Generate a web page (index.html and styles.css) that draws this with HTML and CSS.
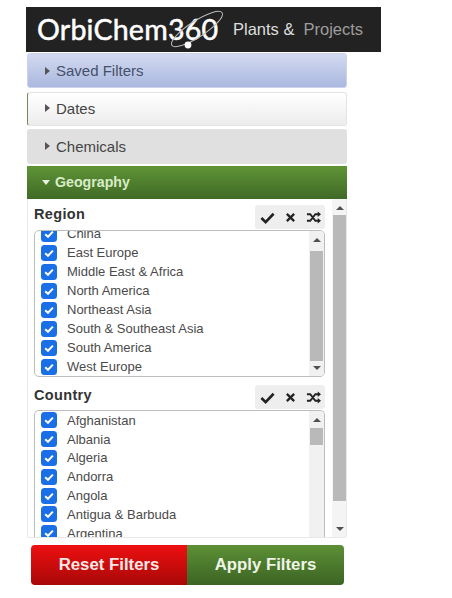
FILE: index.html
```html
<!DOCTYPE html>
<html lang="en">
<head>
<meta charset="utf-8">
<title>OrbiChem360 Filters</title>
<link rel="stylesheet" href="styles.css">
</head>
<body>
<div class="page">
  <svg width="0" height="0" class="defs" aria-hidden="true">
    <symbol id="cb" viewBox="0 0 16 16"><rect width="16" height="16" rx="3.5" fill="#1a6fe6"/><path d="M4.2 8.2 7 10.8 11.9 5.6" fill="none" stroke="#fff" stroke-width="2"/></symbol>
    <symbol id="ck" viewBox="0 0 16 16"><path d="M1.5 8.5 6 13 14.5 4" fill="none" stroke="#222" stroke-width="2.8"/></symbol>
    <symbol id="xx" viewBox="0 0 16 16"><path d="M3.5 3.5 12.5 12.5M12.5 3.5 3.5 12.5" fill="none" stroke="#222" stroke-width="2.8"/></symbol>
    <symbol id="sh" viewBox="0 0 16 16"><path d="M1 4.5H4.5L10 11.5H13M1 11.5H4.5L10 4.5H13" fill="none" stroke="#222" stroke-width="2"/><path d="M12.5 1.5 16 4.5 12.5 7.5ZM12.5 8.5 16 11.5 12.5 14.5Z" fill="#222"/></symbol>
  </svg>
  <header class="brand">
    <div class="logo">
      <span class="logo-text">OrbiChem360</span>
      <svg class="orbit" width="60" height="42" viewBox="0 0 60 42"><ellipse cx="30" cy="21" rx="30" ry="8" transform="rotate(-33 30 21)" fill="none" stroke="#bbb" stroke-width="1"/><circle cx="21" cy="37" r="3.4" fill="#fff"/></svg>
    </div>
    <span class="product">Plants &amp;</span>
    <span class="product dim">Projects</span>
  </header>
  <main class="panel">
    <div class="acc acc-blue"><i class="tri"></i>Saved Filters</div>
    <div class="acc acc-white"><i class="tri"></i>Dates</div>
    <div class="acc acc-grey"><i class="tri"></i>Chemicals</div>
    <div class="acc acc-green"><i class="tri-down"></i>Geography</div>
    <section class="content">
      <div class="content-main">
        <div class="group-head">
          <h2>Region</h2>
          <div class="tools"><svg><use href="#ck"/></svg><svg class="sm"><use href="#xx"/></svg><svg><use href="#sh"/></svg></div>
        </div>
        <div class="list list-region">
          <div class="rows rows-region">
            <div class="row"><svg><use href="#cb"/></svg>China</div>
            <div class="row"><svg><use href="#cb"/></svg>East Europe</div>
            <div class="row"><svg><use href="#cb"/></svg>Middle East &amp; Africa</div>
            <div class="row"><svg><use href="#cb"/></svg>North America</div>
            <div class="row"><svg><use href="#cb"/></svg>Northeast Asia</div>
            <div class="row"><svg><use href="#cb"/></svg>South &amp; Southeast Asia</div>
            <div class="row"><svg><use href="#cb"/></svg>South America</div>
            <div class="row"><svg><use href="#cb"/></svg>West Europe</div>
          </div>
          <div class="sbar">
            <i class="up"></i><b class="track"><b class="thumb thumb-region"></b></b><i class="down"></i>
          </div>
        </div>
        <div class="group-head group-two">
          <h2>Country</h2>
          <div class="tools"><svg><use href="#ck"/></svg><svg class="sm"><use href="#xx"/></svg><svg><use href="#sh"/></svg></div>
        </div>
        <div class="list list-country">
          <div class="rows rows-country">
            <div class="row"><svg><use href="#cb"/></svg>Afghanistan</div>
            <div class="row"><svg><use href="#cb"/></svg>Albania</div>
            <div class="row"><svg><use href="#cb"/></svg>Algeria</div>
            <div class="row"><svg><use href="#cb"/></svg>Andorra</div>
            <div class="row"><svg><use href="#cb"/></svg>Angola</div>
            <div class="row"><svg><use href="#cb"/></svg>Antigua &amp; Barbuda</div>
            <div class="row"><svg><use href="#cb"/></svg>Argentina</div>
          </div>
          <div class="sbar">
            <i class="up"></i><b class="track"><b class="thumb thumb-country"></b></b>
          </div>
        </div>
      </div>
      <div class="sbar sbar-outer">
        <i class="up"></i><b class="track"><b class="thumb thumb-outer"></b></b><i class="down"></i>
      </div>
    </section>
    <div class="actions">
      <button class="btn btn-red">Reset Filters</button>
      <button class="btn btn-green">Apply Filters</button>
    </div>
  </main>
</div>
</body>
</html>
```
FILE: styles.css
```css
* { box-sizing: border-box; }
html, body { margin: 0; height: 100%; background: #fff; overflow: hidden; }
body { font-family: "Liberation Sans", Arial, sans-serif; color: #444; }
.page { padding: 7px 0 0 26px; }
.defs { display: block; height: 0; }

.brand {
  width: 355px; height: 45px; background: #222;
  display: flex; align-items: center;
}
.logo { position: relative; margin-left: 11px; width: 196px; flex: none; }
.logo-text {
  font-family: Lato, sans-serif; font-size: 28.6px; font-weight: 400; color: #fff;
  line-height: 45px; letter-spacing: .2px; display: block; white-space: nowrap;
  -webkit-text-stroke: .5px #fff;
}
.orbit { position: absolute; left: 130px; top: 1px; }
.product { font-size: 16.5px; color: #ddd; margin-right: 8px; }
.dim { color: #9d9d9d; margin-left: 1px; }

.panel { width: 322px; margin-top: 1px; }
.acc {
  display: flex; align-items: center; height: 35px; padding-left: 18px;
  font-size: 15px; border-radius: 3px; margin-left: 1px; width: 320px;
}
.tri {
  width: 0; height: 0; margin-right: 6px;
  border-left: 5px solid #555; border-top: 4px solid transparent; border-bottom: 4px solid transparent;
}
.tri-down {
  width: 0; height: 0; margin-right: 5px; margin-left: -3px;
  border-top: 5px solid #e8f3df; border-left: 4px solid transparent; border-right: 4px solid transparent;
}
.acc-blue { background: linear-gradient(#d3daf0, #aab8df); color: #46506b; border: 1px solid #ccd3e6; padding-left: 17px; }
.acc-white { background: linear-gradient(#fff, #ececec); color: #444; margin-top: 4px; border: 1px solid #e4e4e4; border-left: 1px solid #6f8a58; height: 34px; padding-left: 17px; padding-bottom: 2px; }
.acc-grey { background: #e0e0e0; color: #444; margin-top: 3px; padding-bottom: 1px; }
.acc-green {
  background: linear-gradient(#5f9436, #3f6a26); color: #d9ecc8; margin-top: 2px; height: 33px;
  font-weight: bold; font-size: 14.2px; border-radius: 0; padding-bottom: 1px;
}

.content {
  height: 339px; margin-left: 1px; width: 320px; overflow: hidden;
  display: flex; border: 1px solid #e8e8e8; border-width: 0 1px 1px; border-radius: 0 0 3px 3px;
}
.content-main { width: 302px; padding: 6px 0 0 6px; flex: none; }
.group-head { display: flex; justify-content: space-between; align-items: center; height: 24px; width: 291px; }
.group-head h2 { margin: 0; font-size: 14.5px; color: #333; letter-spacing: .35px; position: relative; top: -3px; }
.group-two { margin-top: 8px; }
.group-two h2 { top: -2px; }
.tools {
  width: 70px; height: 24px; background: #eee; border-radius: 3px;
  display: flex; align-items: center; justify-content: space-between; padding: 0 4px 0 5px;
}
.tools svg { width: 15px; height: 15px; }
.tools svg.sm { width: 13px; height: 13px; }

.list {
  width: 291px; margin-top: 1px; border: 1px solid #bdbdbd; border-radius: 5px;
  display: flex; overflow: hidden; background: #fff;
}
.list-region { height: 147px; }
.list-country { height: 141px; border-bottom: 0; border-radius: 5px 5px 0 0; }
.rows { flex: 1; overflow: hidden; padding-left: 6px; }
.rows-region .row { height: 19px; }
.rows-region .row:first-child { margin-top: -7px; }
.row {
  display: flex; align-items: center; height: 18.8px; font-size: 13px; color: #4a4a4a; white-space: nowrap;
}
.row svg { width: 16px; height: 16px; margin-right: 10px; flex: none; }

.sbar { width: 15px; flex: none; display: flex; flex-direction: column; background: #f1f1f1; }
.up, .down { height: 17px; flex: none; display: flex; align-items: center; justify-content: center; }
.up::before {
  content: ""; border-bottom: 4px solid #505050; border-left: 4px solid transparent; border-right: 4px solid transparent;
}
.down::before {
  content: ""; border-top: 4px solid #505050; border-left: 4px solid transparent; border-right: 4px solid transparent;
}
.track { flex: 1; display: block; min-height: 0; padding: 0 1px; }
.thumb { display: block; background: #b9b9b9; }
.thumb-region { height: 110px; margin-top: 3px; }
.thumb-country { height: 17px; margin-top: 0; }
.sbar-outer { width: 16px; margin-left: 2px; background: #f4f4f4; }
.thumb-outer { height: 286px; margin-top: -1px; }

.actions { display: flex; width: 313px; margin: 7px 0 0 5px; height: 40px; border-radius: 4px; overflow: hidden; }
.btn {
  border: 0; padding: 0; height: 40px; font-family: inherit; font-size: 16.8px; font-weight: bold; color: #fff;
}
.btn-red { width: 156px; background: linear-gradient(#ee1010, #a80808); color: #f8e8e8; }
.btn-green { width: 157px; background: linear-gradient(#5c9035, #3c6424); color: #eef5e6; }
```
